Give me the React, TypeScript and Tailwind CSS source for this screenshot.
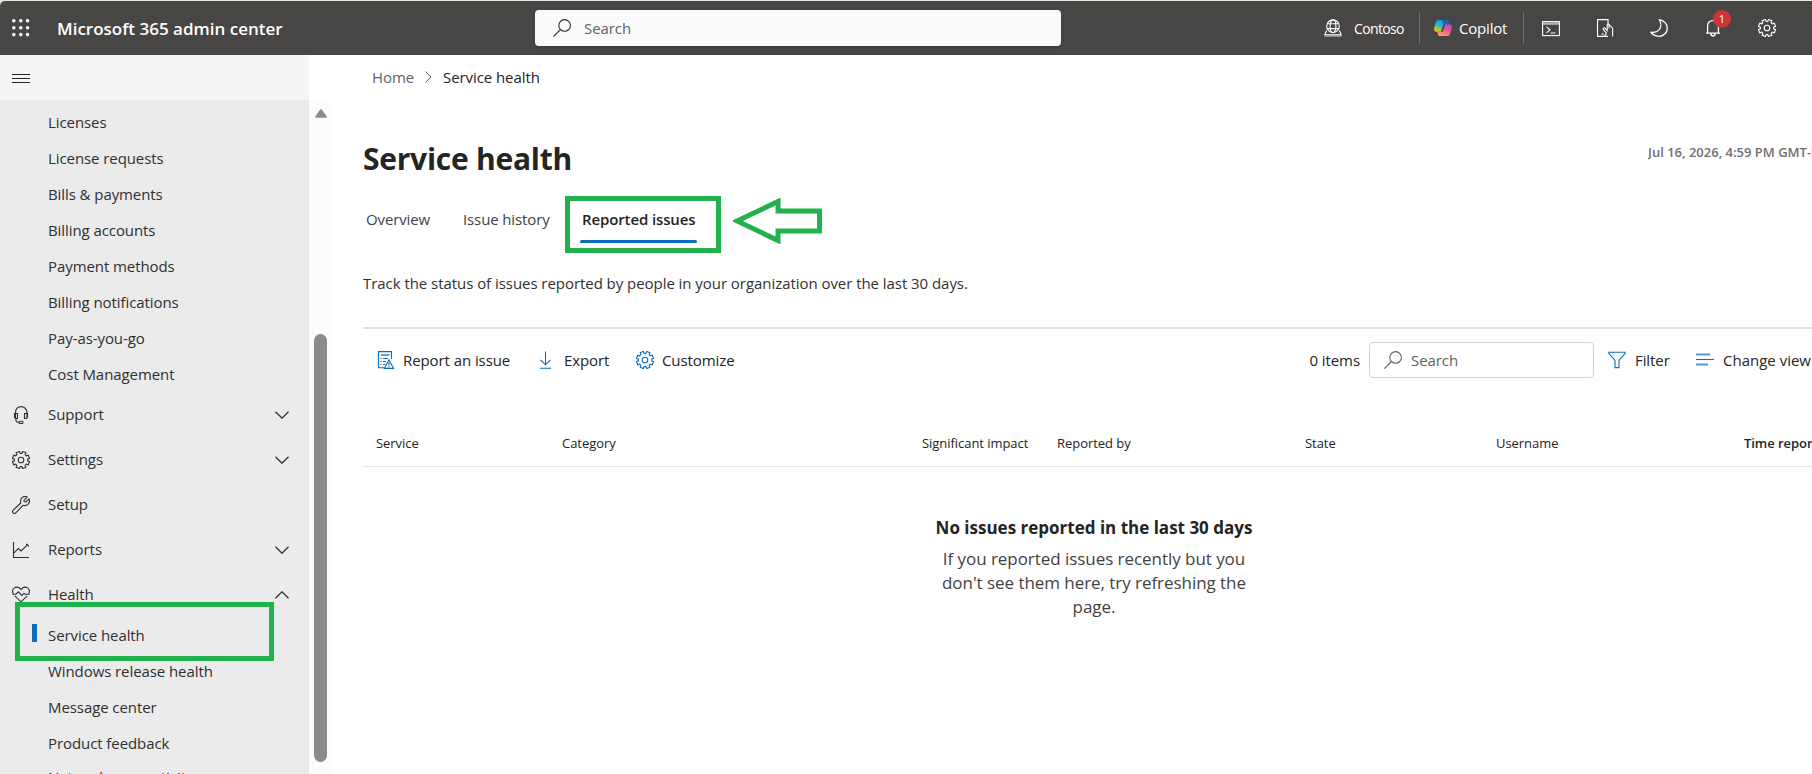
import type { ReactNode } from "react";

const billingLinks = [
  "Licenses",
  "License requests",
  "Bills & payments",
  "Billing accounts",
  "Payment methods",
  "Billing notifications",
  "Pay-as-you-go",
  "Cost Management",
];

const healthLinks = [
  "Service health",
  "Windows release health",
  "Message center",
  "Product feedback",
  "Network connectivity",
];

// eight rounded teeth around a ring, centred on 9,9
function gearPath() {
  const pts: string[] = [];
  const at = (deg: number, r: number) => {
    const a = (deg * Math.PI) / 180;
    return `${(9 + r * Math.cos(a)).toFixed(2)} ${(9 + r * Math.sin(a)).toFixed(2)}`;
  };
  for (let i = 0; i < 8; i++) {
    const c = 22.5 + i * 45;
    pts.push(at(c - 15, 6.7), at(c - 12, 8.7), at(c + 12, 8.7), at(c + 15, 6.7));
  }
  return `M${pts.join("L")}Z`;
}

function Svg({ children, w = 18, h = 18, className = "" }: { children: ReactNode; w?: number; h?: number; className?: string }) {
  return (
    <svg
      width={w}
      height={h}
      viewBox={`0 0 ${w} ${h}`}
      fill="none"
      stroke="currentColor"
      strokeWidth="1.1"
      className={`shrink-0 ${className}`}
    >
      {children}
    </svg>
  );
}

function Gear({ className = "" }: { className?: string }) {
  return (
    <Svg className={className}>
      <path d={gearPath()} strokeLinejoin="round" />
      <circle cx="9" cy="9" r="2.8" />
    </Svg>
  );
}

function SearchIcon({ className = "" }: { className?: string }) {
  return (
    <Svg className={className}>
      <circle cx="11.6" cy="6.4" r="5.8" />
      <path d="M7.5 10.5L0.4 17.6" />
    </Svg>
  );
}

function Chevron({ up = false }: { up?: boolean }) {
  return (
    <Svg w={14} h={8} className={up ? "rotate-180" : ""}>
      <path d="M0.5 0.7L7 7.2L13.5 0.7" strokeWidth="1.3" />
    </Svg>
  );
}

function Headset() {
  return (
    <Svg>
      <path d="M3.5 12V6.5C3.5 3 6 0.6 9 0.6S15 3 15 6.5V12" />
      <path d="M2.5 7.5H5.5V12.5H4C3 12.5 2.5 12 2.5 11V7.5ZM15.5 7.5H12.5V12.5H14C15 12.5 15.5 12 15.5 11V7.5Z" />
      <path d="M4 12.5V14.5C4 15.8 5 16.3 6 16.3H7" />
      <rect x="7" y="15.3" width="4" height="2.2" rx="1" />
    </Svg>
  );
}

function Wrench() {
  return (
    <Svg>
      <path
        d="M15.2 1.1C13.3 0.1 11 0.5 9.6 2.2C8.4 3.7 8.3 5.3 8.8 7L1.2 14.2C0.4 15 0.4 16.1 1.1 16.9C1.9 17.6 3 17.6 3.8 16.8L11 9.3C13 9.9 14.8 9.6 16.1 8.2C17.5 6.7 17.8 4.7 17 2.9L13.8 6L12.1 5.8L11.9 4.3L15.2 1.1Z"
        strokeLinejoin="round"
      />
    </Svg>
  );
}

function LineChart() {
  return (
    <Svg>
      <path d="M1.5 1V16.5H17" />
      <path d="M2 11.8L6.3 7.5L9 10L15.8 3.6M14 3.4H15L17 5.4" />
    </Svg>
  );
}

function HeartPulse() {
  return (
    <Svg>
      <path d="M1.4 8C-0.1 5.6 0.6 3 2.4 1.9C4.6 0.6 7.1 1.2 9 3.4C10.9 1.2 13.4 0.6 15.6 1.9C17.4 3 18.1 5.6 16.6 8" />
      <path d="M0.5 8.2H3.8L6.4 5.8L9.8 9.4L12 7.4L13 8.2H17.5" />
      <path d="M2.8 9.8L9 15.8L15.2 9.8" />
    </Svg>
  );
}

function NavGroup({ icon, label, open }: { icon: ReactNode; label: string; open?: boolean }) {
  return (
    <div className="flex h-[45px] shrink-0 items-center pl-3 pr-5">
      {icon}
      <span className="ml-[18px] flex-1">{label}</span>
      {open !== undefined && <Chevron up={open} />}
    </div>
  );
}

function Sidebar() {
  return (
    <aside className="flex w-[331px] shrink-0 flex-col">
      <div className="flex h-[45px] w-[309px] shrink-0 items-center bg-[#f5f5f5] pl-3 pt-0.5">
        <Svg h={9} className="text-[#242424]">
          <path d="M0 0.5H18M0 4.5H18M0 8.5H18" strokeWidth="1" />
        </Svg>
      </div>
      <div className="flex min-h-0 flex-1 overflow-hidden">
        <nav className="flex w-[309px] flex-col bg-[#ebebeb] pt-1 text-[15px] tracking-[-0.08px] text-[#303030]">
          {billingLinks.map((l) => (
            <a key={l} className="flex h-9 shrink-0 items-center pl-12">
              {l}
            </a>
          ))}
          <NavGroup icon={<Headset />} label="Support" open={false} />
          <NavGroup icon={<Gear />} label="Settings" open={false} />
          <NavGroup icon={<Wrench />} label="Setup" />
          <NavGroup icon={<LineChart />} label="Reports" open={false} />
          <div className="relative">
            <NavGroup icon={<HeartPulse />} label="Health" open />
            {/* callout drawn around the selected link */}
            <div className="absolute left-[15px] top-[30px] h-[59px] w-[259px] border-[5px] border-[#22b14c]" />
          </div>
          {healthLinks.map((l, i) => (
            <a key={l} className={`flex h-9 shrink-0 items-center last:-mt-0.5 ${i === 0 ? "pl-8" : "pl-12"}`}>
              {i === 0 && <span className="-mt-1 mr-[11px] h-[18px] w-[5px] bg-[#0f6cbd]" />}
              {l}
            </a>
          ))}
        </nav>
        <div className="flex w-[22px] flex-col items-center bg-[#fcfcfc] pl-px pt-[9px]">
          <svg width="12" height="9" viewBox="0 0 12 9" className="text-[#8b8b8b]">
            <path d="M6 1.2L10.8 7.8H1.2Z" fill="currentColor" stroke="currentColor" strokeWidth="2" strokeLinejoin="round" />
          </svg>
          <div className="mt-[216px] h-[428px] w-[13px] shrink-0 rounded-full bg-[#8b8b8b]" />
        </div>
      </div>
    </aside>
  );
}

function CopilotLogo() {
  return (
    <svg width="18" height="18" viewBox="0 0 18 18" className="shrink-0">
      <defs>
        <linearGradient id="cpA" x1="0.6" y1="0" x2="0.2" y2="1">
          <stop offset="0" stopColor="#1b8fe8" />
          <stop offset="0.45" stopColor="#2cb5c9" />
          <stop offset="0.7" stopColor="#8cc653" />
          <stop offset="1" stopColor="#f5c51a" />
        </linearGradient>
        <linearGradient id="cpB" x1="0.8" y1="0" x2="0.3" y2="1">
          <stop offset="0" stopColor="#a04de0" />
          <stop offset="0.5" stopColor="#f0568c" />
          <stop offset="1" stopColor="#ffa45c" />
        </linearGradient>
      </defs>
      <path d="M8 1H12.2C13.5 1 13.8 1.8 14.2 3L14.8 5H11.5C10.4 5 9.8 5.8 9.5 6.8L7.6 12.8H2.8C0.6 12.8 -0.3 10.9 0.2 8.8L1.7 3.8C2.3 1.9 3.2 1 5 1Z" fill="url(#cpA)" />
      <path d="M8 1H12.2C13.5 1 13.8 1.8 14.2 3L14.8 5H11.5L9.8 5.8Z" fill="#1763c6" />
      <path d="M10 17H5.8C4.5 17 4.2 16.2 3.8 15L3.2 13H6.5C7.6 13 8.2 12.2 8.5 11.2L10.4 5.2H15.2C17.4 5.2 18.3 7.1 17.8 9.2L16.3 14.2C15.7 16.1 14.8 17 13 17Z" fill="url(#cpB)" />
      <path d="M10.1 6.2L8.1 12" stroke="#484644" strokeWidth="1.8" strokeLinecap="round" />
    </svg>
  );
}

function TopBar() {
  return (
    <div className="bg-[#e3e8e3] pt-px">
      <header className="flex h-[54px] items-center rounded-tl-[5px] bg-[#484644] text-white">
        <svg width="18" height="18" viewBox="0 0 18 18" fill="currentColor" className="ml-3 shrink-0">
          {[1.8, 8.8, 15.6].map((y) => [1.8, 8.8, 15.6].map((x) => <circle key={`${x}-${y}`} cx={x} cy={y} r="1.8" />))}
        </svg>
        <span className="ml-[27px] w-[478px] pt-px text-[17px] font-semibold">Microsoft 365 admin center</span>
        <div className="flex h-9 w-[526px] items-center rounded bg-[#fafafa] pl-[18px] text-[15px] tracking-[-0.08px] text-[#616161] shadow">
          <SearchIcon className="text-[#333]" />
          <span className="ml-[13px] pt-px">Search</span>
        </div>
        <div className="ml-[263px] flex w-[95px] items-center text-[14px] tracking-[-0.65px]">
          <Svg>
            <circle cx="9" cy="7.2" r="6.3" />
            <ellipse cx="9" cy="7.2" rx="2.9" ry="6.3" />
            <path d="M3.2 4.8H14.8M3.2 9.6H14.8" />
            <path d="M2.6 11.5L0.8 15.8H17.2L15.4 11.5" />
            <path d="M0.5 17H17.5" className="opacity-70" />
          </Svg>
          <span className="ml-3 pt-px">Contoso</span>
        </div>
        <div className="flex h-8 w-[105px] items-center border-x border-[#6f6d6b] pl-[14px] text-[15px] tracking-[-0.2px]">
          <CopilotLogo />
          <span className="ml-[7px]">Copilot</span>
        </div>
        <div className="flex flex-1 items-center pl-[18px]">
          <Svg>
            <rect x="0.6" y="2.6" width="16.8" height="14" />
            <path d="M0.6 4.6H17.4" strokeWidth="2.4" className="opacity-60" />
            <path d="M4.5 7.8L8 10.8L4.5 13.8" />
            <path d="M8.5 14H13.5" strokeWidth="1.4" className="opacity-70" />
          </Svg>
          <Svg className="ml-[36px]">
            <path d="M5.5 17.4H1.5V0.6H12V4.5M12 17.4H5.5" />
            <path d="M8.5 17.4L10.4 14.2L7.4 10.4C6.8 9.2 8.2 8.4 9.2 9.4L11.2 11.6V5.6C11.4 4.6 12.8 4.6 13 5.6L16.6 9.2V17.4" />
            <path d="M13 5.6V9.5M5.5 15H7.8" />
          </Svg>
          <Svg className="ml-[36px]">
            <path d="M9.2 0.7C14 1.4 17.3 5 17.3 9.2C17.3 13.8 13.5 17.3 8.9 17.3C5.5 17.3 2.6 15.8 0.8 13.2C4 14 7.2 13 9.2 10.6C11.4 7.8 11.2 3.6 9.2 0.7Z" strokeLinejoin="round" strokeWidth="1.3" />
          </Svg>
          <div className="relative ml-[36px]">
            <Svg>
              <path d="M3.6 14.2V7.2C3.6 3.6 6 1.6 9 1.6S14.4 3.6 14.4 7.2V14.2M2 14.2H16M6.8 14.4C7 16.2 7.8 17 9 17S11 16.2 11.2 14.4" strokeWidth="1.3" />
            </Svg>
            <span className="absolute -top-[9px] left-[9px] flex size-[18px] items-center justify-center rounded-full bg-[#d13438] text-[11px]">
              1
            </span>
          </div>
          <Gear className="ml-[36px]" />
        </div>
      </header>
    </div>
  );
}

function Toolbar() {
  return (
    <div className="mt-[13px] flex h-9 items-center text-[15px] tracking-[-0.08px] text-[#242424]">
      <Svg className="ml-[14px] text-[#0f6cbd]">
        <path d="M7 16.8H1.5V0.6H14.5V8" />
        <path d="M4 4H12.5" strokeWidth="1.8" className="opacity-70" />
        <path d="M3.5 7.5H4.7M6 7.5H11M3.5 10.5H4.7M6 10.5H9M3.5 13.5H4.7M6 13.5H8" />
        <path d="M12 8.8L7.4 17.4H16.6ZM12 11.5V14.5M12 15.3V16.4" />
      </Svg>
      <span className="ml-2 w-[134px] shrink-0 pt-px">Report an issue</span>
      <Svg className="text-[#0f6cbd]">
        <path d="M8.5 0.4V13.6M3.5 8.8L8.5 13.8L13.5 8.8M3 17.3H14" />
      </Svg>
      <span className="ml-[9px] w-[72px] shrink-0 pt-px">Export</span>
      <Gear className="text-[#0f6cbd]" />
      <span className="ml-2 pt-px">Customize</span>
      <span className="ml-auto shrink-0 pt-px">0 items</span>
      <div className="ml-[9px] flex h-9 w-[225px] shrink-0 items-center rounded border border-[#d1d1d1] pl-[14px] text-[#616161]">
        <SearchIcon />
        <span className="ml-[9px] pt-px">Search</span>
      </div>
      <Svg className="ml-[14px] text-[#0f6cbd]">
        <path d="M0.8 1.2H17.2V2.4L11 9.4V16.6H7V9.4L0.8 2.4Z" />
      </Svg>
      <span className="ml-[9px] w-[61px] shrink-0 pt-px">Filter</span>
      <Svg className="text-[#0f6cbd]">
        <path d="M0 3.5H14M0 13.5H12" strokeWidth="1.8" className="opacity-70" />
        <path d="M0 8.5H18" />
      </Svg>
      <span className="ml-[9px] w-[89px] shrink-0 whitespace-nowrap pt-px tracking-normal">Change view</span>
    </div>
  );
}

export default function App() {
  return (
    <div className="flex h-[774px] w-[1812px] flex-col overflow-hidden bg-white font-['Open_Sans','Noto_Sans',sans-serif] text-[#242424]">
      <TopBar />
      <div className="flex min-h-0 flex-1">
        <Sidebar />
        <main className="min-w-0 flex-1 overflow-hidden pl-8">
          <div className="ml-[9px] mt-[11px] flex h-[22px] items-center text-[15px] tracking-[-0.08px]">
            <span className="text-[#616161]">Home</span>
            <Svg w={7} h={12} className="mx-[11px] text-[#616161]">
              <path d="M0.5 0.5L6 6L0.5 11.5" strokeWidth="1" />
            </Svg>
            <span>Service health</span>
          </div>

          <div className="mt-[48px] flex h-11 items-center justify-between">
            <h1 className="text-[30px] font-bold tracking-[-0.25px]">Service health</h1>
            <div className="-mt-[11px] w-[164px] overflow-hidden whitespace-nowrap text-[13px] font-semibold text-[#707070]">
              Jul 16, 2026, 4:59 PM GMT-5
            </div>
          </div>

          <div className="mt-[16px] flex h-[57px] items-center text-[15px] tracking-[-0.12px] text-[#424242]">
            <span className="-mt-[11px] ml-[3px] w-[97px]">Overview</span>
            <span className="-mt-[11px] w-[102px]">Issue history</span>
            <div className="flex h-[57px] w-[156px] items-center border-[5px] border-[#22b14c] pl-[10px]">
              <div className="relative -mt-[11px] w-[117px] pl-[2px] font-semibold text-[#242424]">
                Reported issues
                <div className="absolute -bottom-[13px] left-0 h-[3px] w-[117px] rounded-full bg-[#0f6cbd]" />
              </div>
            </div>
            <svg width="90" height="46" viewBox="0 0 90 46" fill="none" className="ml-3 -mt-2">
              <path d="M4 23L45 3.5V13H86.5V33H45V42.5Z" stroke="#22b14c" strokeWidth="5" />
            </svg>
          </div>

          <p className="mt-5 text-[15px] leading-5 tracking-[-0.05px] text-[#323130]">
            Track the status of issues reported by people in your organization over the last 30 days.
          </p>
          <div className="mt-[34px] h-[2px] bg-[#e0e0e0]" />
          <Toolbar />

          <div className="mt-[46px] grid h-[43px] w-[1600px] grid-cols-[186px_360px_135px_248px_191px_248px_1fr] items-center border-b border-[#e5e5e5] pb-0.5 pl-[13px] text-[13px] tracking-[-0.05px]">
            <span>Service</span>
            <span>Category</span>
            <span>Significant impact</span>
            <span>Reported by</span>
            <span>State</span>
            <span>Username</span>
            <span className="font-semibold">Time reported</span>
          </div>

          <div className="mt-[47px] ml-[571px] w-[320px] text-center">
            <h2 className="whitespace-nowrap text-[17px] font-bold leading-7">No issues reported in the last 30 days</h2>
            <p className="mt-[5px] text-[17px] leading-6 tracking-[-0.05px] text-[#424242]">
              If you reported issues recently but you don't see them here, try refreshing the page.
            </p>
          </div>
        </main>
      </div>
    </div>
  );
}
